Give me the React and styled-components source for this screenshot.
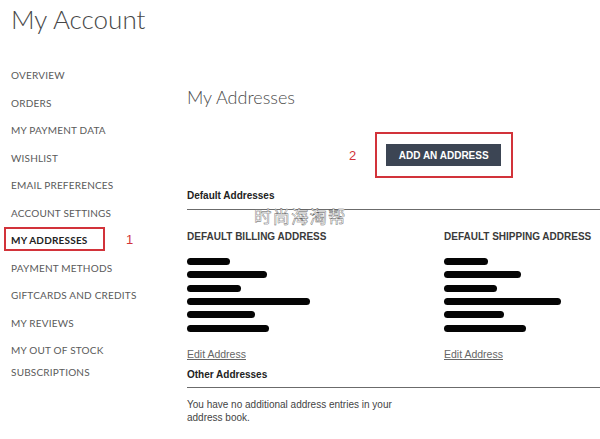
import React from "react";
import styled, { createGlobalStyle } from "styled-components";

const Global = createGlobalStyle`
  html, body { margin: 0; padding: 0; background: #fff; }
  body { font-family: "Liberation Sans", Arial, sans-serif; }
`;

const Page = styled.div`
  width: 600px;
  height: 439px;
  overflow: hidden;
  background: #fff;
`;

const Title = styled.h1`
  margin: 0;
  padding: 4px 0 0 11px;
  font-family: Lato, "Open Sans", sans-serif;
  font-weight: 300;
  font-size: 26px;
  line-height: 30px;
  color: #474747;
`;

const Body = styled.div`
  display: flex;
`;

const Sidebar = styled.ul`
  list-style: none;
  margin: 0;
  padding: 30px 0 0 11px;
  width: 176px;
  flex: none;
`;

const NavItem = styled.li`
  position: relative;
  font-family: Lato, "Open Sans", sans-serif;
  font-size: 10px;
  line-height: 22px;
  margin-bottom: 5.5px;
  text-transform: uppercase;
  letter-spacing: 0.2px;
  color: ${(p) => (p.$active ? "#222" : "#5a5a5a")};
  font-weight: ${(p) => (p.$active ? 700 : 400)};
  width: ${(p) => (p.$wrap ? "100px" : "auto")};
`;

const NavMark = styled.span`
  position: absolute;
  left: -7px;
  top: -2px;
  width: 97px;
  height: 20px;
  border: 2px solid #d2333a;
  pointer-events: none;
`;

const Step = styled.span`
  font-family: "Liberation Sans", Arial, sans-serif;
  font-size: 13px;
  color: #d2333a;
  font-weight: 400;
`;

const NavStep = styled(Step)`
  position: absolute;
  left: 115px;
  top: 0;
  line-height: 22px;
`;

const Main = styled.main`
  position: relative;
  flex: 1;
  padding-top: 51px;
`;

const Heading = styled.h2`
  margin: 0;
  font-family: Lato, "Open Sans", sans-serif;
  font-weight: 300;
  font-size: 18px;
  line-height: 24px;
  color: #4d4d4d;
`;

const ActionRow = styled.div`
  display: flex;
  align-items: center;
  gap: 19px;
  margin-top: 23px;
  padding-left: 162px;
`;

const ButtonFrame = styled.div`
  border: 2px solid #d2333a;
  padding: 10px 10px 10px 9px;
`;

const Button = styled.button`
  display: block;
  width: 115px;
  height: 22px;
  padding: 0;
  border: none;
  background: #3c4554;
  color: #fff;
  font-family: "Liberation Sans", Arial, sans-serif;
  font-weight: 700;
  font-size: 10px;
  letter-spacing: 0;
  cursor: pointer;
`;

const SectionTitle = styled.div`
  margin-top: ${(p) => p.$top}px;
  padding-bottom: ${(p) => p.$pad}px;
  border-bottom: 1px solid #6b6b6b;
  font-weight: 700;
  font-size: 10px;
  line-height: 14px;
  color: #222;
`;

const Watermark = styled.span`
  position: absolute;
  left: 67px;
  top: 173px;
  font-family: "Noto Sans CJK SC", sans-serif;
  font-size: 17.5px;
  line-height: 18px;
  letter-spacing: 1px;
  color: #fff;
  -webkit-text-stroke: 0.4px #555;
  pointer-events: none;
`;

const Columns = styled.div`
  display: grid;
  grid-template-columns: 257px 1fr;
  margin-top: 20px;
`;

const Card = styled.div`
  display: flex;
  flex-direction: column;
  align-items: flex-start;
`;

const CardTitle = styled.div`
  font-family: "Liberation Sans", Arial, sans-serif;
  font-weight: 700;
  font-size: 10px;
  line-height: 14px;
  color: #3a3a3a;
  text-transform: uppercase;
`;

const Lines = styled.div`
  margin-top: 11px;
  display: flex;
  flex-direction: column;
`;

const Line = styled.div`
  height: 13.33px;
  display: flex;
  align-items: center;
`;

const Redact = styled.span`
  display: block;
  height: 7px;
  border-radius: 3.5px;
  background: #050505;
`;

const EditLink = styled.a`
  margin-top: 12.5px;
  font-size: 10.5px;
  line-height: 14px;
  color: #666;
  text-decoration: underline;
  text-underline-offset: 1px;
`;

const Note = styled.p`
  margin: 10px 0 0;
  max-width: 240px;
  font-size: 10px;
  line-height: 13px;
  color: #444;
`;

const billing = [43, 80, 54, 123, 68, 82];
const shipping = [44, 77, 53, 117, 60, 82];

const nav = [
  "Overview",
  "Orders",
  "My Payment Data",
  "Wishlist",
  "Email Preferences",
  "Account Settings",
  "My Addresses",
  "Payment Methods",
  "Giftcards and Credits",
  "My Reviews",
  "My Out of Stock Subscriptions",
];

function AddressCard({ title, widths }) {
  return (
    <Card>
      <CardTitle>{title}</CardTitle>
      <Lines>
        {widths.map((w, i) => (
          <Line key={i}>
            <Redact style={{ width: w }} />
          </Line>
        ))}
      </Lines>
      <EditLink href="#">Edit Address</EditLink>
    </Card>
  );
}

export default function App() {
  return (
    <Page>
      <Global />
      <Title>My Account</Title>
      <Body>
        <Sidebar>
          {nav.map((n) => {
            const active = n === "My Addresses";
            return (
              <NavItem key={n} $active={active} $wrap={n.length > 22}>
                {n}
                {active && (
                  <>
                    <NavMark />
                    <NavStep>1</NavStep>
                  </>
                )}
              </NavItem>
            );
          })}
        </Sidebar>
        <Main>
          <Heading>My Addresses</Heading>
          <ActionRow>
            <Step>2</Step>
            <ButtonFrame>
              <Button>ADD AN ADDRESS</Button>
            </ButtonFrame>
          </ActionRow>
          <SectionTitle $top={11} $pad={6}>Default Addresses</SectionTitle>
          <Watermark>时尚海淘帮</Watermark>
          <Columns>
            <AddressCard title="Default Billing Address" widths={billing} />
            <AddressCard title="Default Shipping Address" widths={shipping} />
          </Columns>
          <SectionTitle $top={6.5} $pad={5.5}>Other Addresses</SectionTitle>
          <Note>You have no additional address entries in your address book.</Note>
        </Main>
      </Body>
    </Page>
  );
}
